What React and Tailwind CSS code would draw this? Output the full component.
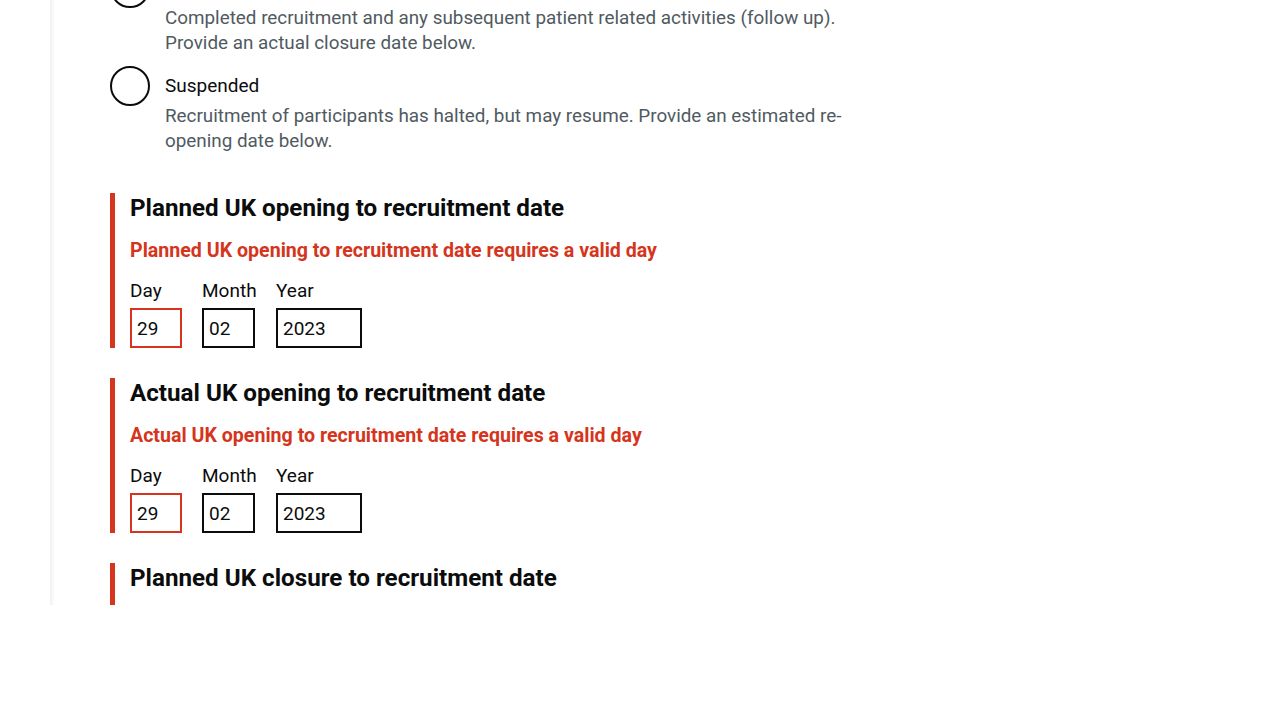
import React from "react";

const radios = [
  {
    label: "Closed",
    hint: "Completed recruitment and any subsequent patient related activities (follow up). Provide an actual closure date below.",
  },
  {
    label: "Suspended",
    hint: "Recruitment of participants has halted, but may resume. Provide an estimated re-opening date below.",
  },
];

const dateFields = [
  {
    title: "Planned UK opening to recruitment date",
    error: "Planned UK opening to recruitment date requires a valid day",
    value: ["29", "02", "2023"],
  },
  {
    title: "Actual UK opening to recruitment date",
    error: "Actual UK opening to recruitment date requires a valid day",
    value: ["29", "02", "2023"],
  },
  {
    title: "Planned UK closure to recruitment date",
    error: "",
    value: ["", "", ""],
  },
];

const RadioItem = ({ label, hint }) => (
  <div className="flex mb-[10px]">
    <div className="w-10 h-10 shrink-0 rounded-full border-2 border-[#0b0c0c] bg-white" />
    <div className="pl-[15px] w-[720px]">
      <div className="pt-[7px] text-[19px] leading-[25px] text-[#0b0c0c]">
        {label}
      </div>
      <div className="mt-[6px] text-[18.85px] leading-[25px] text-[#505a5f]">
        {hint}
      </div>
    </div>
  </div>
);

const DateField = ({ title, error, value }) => (
  <div className="border-l-[5px] border-[#d4351c] pl-[15px] mb-[30px]">
    <h2 className="text-[24.2px] leading-[30px] font-bold text-[#0b0c0c] mb-[15px]">
      {title}
    </h2>
    {error && (
      <p className="text-[19.6px] leading-[25px] font-bold text-[#d4351c] mb-[15px]">
        {error}
      </p>
    )}
    <div className="flex gap-5">
      {[
        ["Day", "w-[52px]", true],
        ["Month", "w-[53px]", false],
        ["Year", "w-[86px]", false],
      ].map(([name, width, bad], i) => (
        <div key={name} className={"flex flex-col " + (name === "Month" ? "w-[54px]" : "")}>
          <label className="text-[19px] leading-[25px] text-[#0b0c0c] mb-[5px] whitespace-nowrap">
            {name}
          </label>
          <input
            readOnly
            value={value[i]}
            className={
              "h-10 border-2 px-[5px] text-[19px] text-[#0b0c0c] outline-none " +
              width +
              (bad && error ? " border-[#d4351c]" : " border-[#0b0c0c]")
            }
          />
        </div>
      ))}
    </div>
  </div>
);

export default function App() {
  return (
    <div className="w-[1280px] h-[720px] bg-white font-['Roboto',sans-serif]">
      <div className="ml-[50px] h-[605px] overflow-hidden shadow-[inset_5px_0_4px_-3px_rgba(0,0,0,0.07)]">
        <div className="pl-[60px] -mt-[32px]">
          <div className="mb-[39px]">
            {radios.map((r) => (
              <RadioItem key={r.label} {...r} />
            ))}
          </div>
          {dateFields.map((f) => (
            <DateField key={f.title} {...f} />
          ))}
        </div>
      </div>
    </div>
  );
}
